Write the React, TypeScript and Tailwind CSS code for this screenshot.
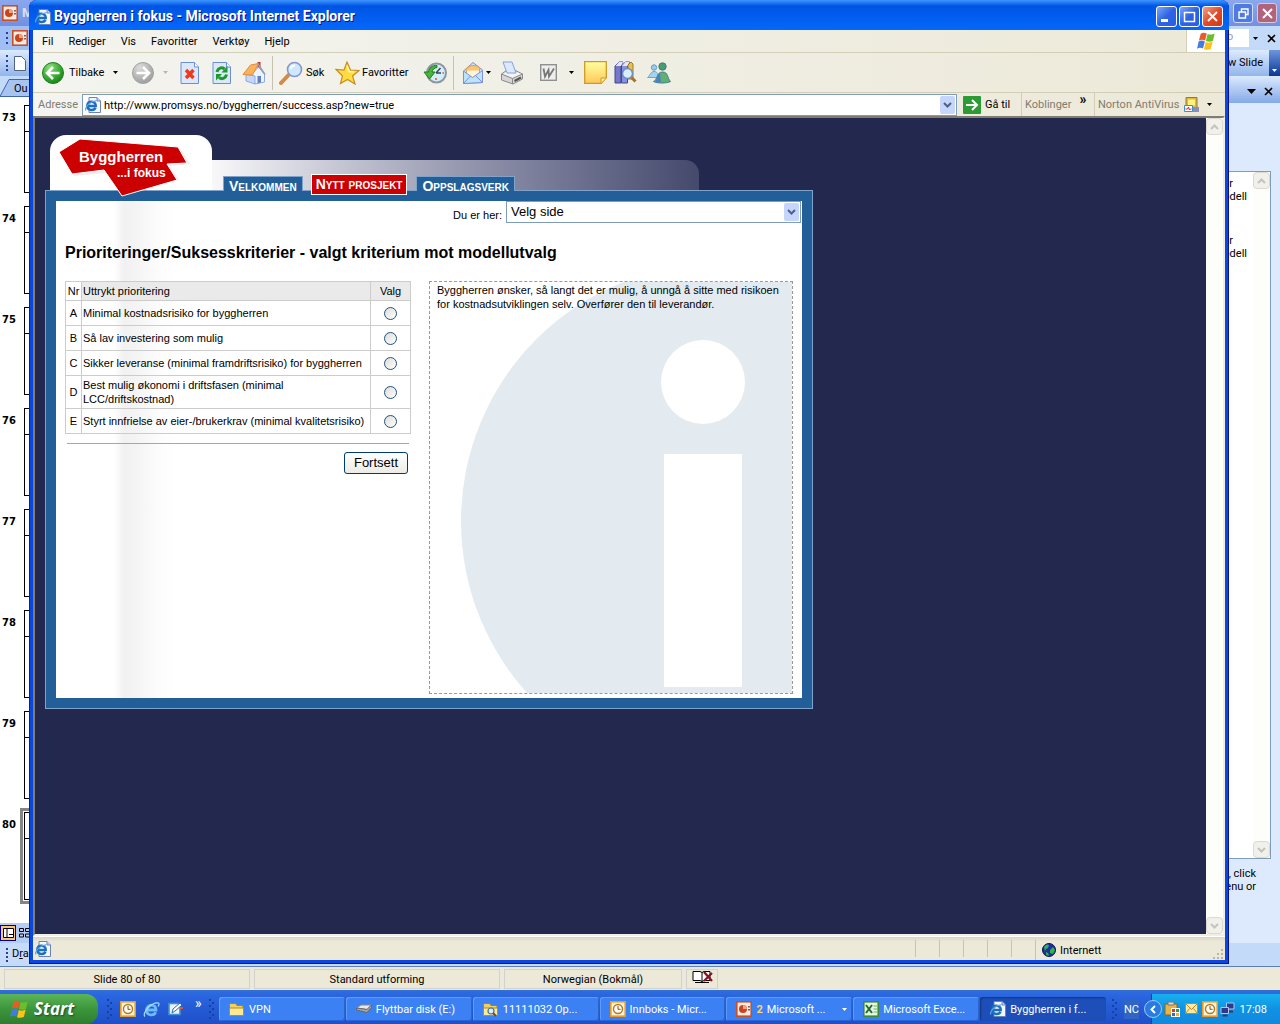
import type { ReactNode } from 'react';

const slides = [73, 74, 75, 76, 77, 78, 79, 80];

const priorities = [
  { nr: 'A', text: 'Minimal kostnadsrisiko for byggherren' },
  { nr: 'B', text: 'Så lav investering som mulig' },
  { nr: 'C', text: 'Sikker leveranse (minimal framdriftsrisiko) for byggherren' },
  { nr: 'D', text: 'Best mulig økonomi i driftsfasen (minimal LCC/driftskostnad)' },
  { nr: 'E', text: 'Styrt innfrielse av eier-/brukerkrav (minimal kvalitetsrisiko)' },
];

/* ---------- icons ---------- */

function Caret({ color = '#000' }: { color?: string }) {
  return (
    <svg width="5" height="3" viewBox="0 0 5 3" className="shrink-0">
      <path d="M0 0h5L2.5 3z" fill={color} />
    </svg>
  );
}

function Chevron({ up = false, color = '#4d6185' }: { up?: boolean; color?: string }) {
  return (
    <svg width="9" height="6" viewBox="0 0 9 6" fill="none" stroke={color} strokeWidth="2">
      <path d={up ? 'M1 5l3.5-3.5L8 5' : 'M1 1l3.5 3.5L8 1'} />
    </svg>
  );
}

function IePageIcon() {
  return (
    <svg width="16" height="16" viewBox="0 0 16 16" className="shrink-0">
      <path d="M4 .5h8l3.5 3.5v11.5H4z" fill="#f4f7ff" stroke="#6b82b8" />
      <path d="M12 .5V4h3.5" fill="#c7d5f3" stroke="#6b82b8" />
      <path d="M2.500 9h8.300c.2-5.500-8.200-6-8.600 0 .2 5 7 5 8.300 1.800" fill="none" stroke="#1c6fc0" strokeWidth="2.400" />
      <path d="M1 13.500C-1 10.500 6 3.500 11.500 4" fill="none" stroke="#5aa9e6" strokeWidth="1.200" />
    </svg>
  );
}

function IeIcon() {
  return (
    <svg width="17" height="17" viewBox="0 0 17 17">
      <path d="M4 9h9c.2-6.500-9.300-6.500-9.500.3.2 5.900 7.700 5.700 9.200 2" fill="none" stroke="#6cbcf8" strokeWidth="2.800" />
      <path d="M2 15.500C-1.500 12.500 8 1 15.500 2c1 .8.300 2.400-.5 3.500" fill="none" stroke="#a9dcff" strokeWidth="1.200" />
    </svg>
  );
}

function WindowsFlag({ size = 20 }: { size?: number }) {
  return (
    <svg width={size} height={size} viewBox="0 0 20 20" className="shrink-0">
      <path d="M4.500 2.500c2-1.300 3.700-1 5.700-.2L8.700 9C6.500 8 4.800 8 2.800 9z" fill="#ee5a24" />
      <path d="M11 2.800c2 .8 4 .9 6.800-.5L16.200 9.200c-2.400 1.300-4.500 1.200-6.700.3z" fill="#6cbf2c" />
      <path d="M2.500 10c2-1.200 3.900-1 5.900-.1l-1.700 6.800c-2-1-3.800-.9-5.700.2z" fill="#3f7de0" />
      <path d="M9.300 10.500c2 .9 4.200.9 6.600-.4l-1.700 6.800c-2.200 1.400-4.400 1.300-6.600.4z" fill="#fbc21a" />
    </svg>
  );
}

function RoundArrow({ back = false }: { back?: boolean }) {
  return (
    <svg width="24" height="24" viewBox="0 0 24 24">
      <defs>
        <radialGradient id={back ? 'goBack' : 'goFwd'} cx=".35" cy=".25" r=".85">
          <stop offset="0" stopColor={back ? '#8be07c' : '#dcdcdc'} />
          <stop offset=".6" stopColor={back ? '#35a82f' : '#b3b3b3'} />
          <stop offset="1" stopColor={back ? '#157a15' : '#999'} />
        </radialGradient>
      </defs>
      <circle cx="12" cy="12" r="10.500" fill={`url(#${back ? 'goBack' : 'goFwd'})`} stroke={back ? '#1c7f1c' : '#a2a2a2'} />
      <path
        d={back ? 'M12 6l-6 6 6 6M6.500 12H18.500' : 'M12 6l6 6-6 6M17.500 12H5.500'}
        fill="none"
        stroke="#fff"
        strokeWidth="2.600"
      />
    </svg>
  );
}

function PageFrame({ children }: { children: ReactNode }) {
  return (
    <svg width="20" height="24" viewBox="0 0 20 24">
      <path d="M1 1.500h13.500L18.500 6v16.500H1z" fill="#dbe7fb" stroke="#6c8fd0" />
      <path d="M14.500 1.500V6h4" fill="#fff" stroke="#6c8fd0" />
      {children}
    </svg>
  );
}

function StopIcon() {
  return (
    <PageFrame>
      <path d="M6 9l7.500 8M13.500 9L6 17" stroke="#f0391a" strokeWidth="3.400" />
    </PageFrame>
  );
}

function RefreshIcon() {
  return (
    <PageFrame>
      <path d="M5 11c1-4.500 5-5 7.500-3" fill="none" stroke="#1e9a2c" strokeWidth="3" />
      <path d="M9.500 11.500h6V5z" fill="#1e9a2c" />
      <path d="M14.500 13.500c-1 4.500-5 5-7.500 3" fill="none" stroke="#1e9a2c" strokeWidth="3" />
      <path d="M10 13H4v6.500z" fill="#1e9a2c" />
    </PageFrame>
  );
}

function HomeIcon() {
  return (
    <svg width="24" height="24" viewBox="0 0 24 24">
      <path d="M15.500 1h3v7h-3z" fill="#c0392b" />
      <path d="M10 13l6.500-7 6 7.500V21L13 23z" fill="#eef4ff" stroke="#8ea9dc" />
      <path d="M4 13.500V20l9 3v-8z" fill="#c5d6f6" stroke="#8ea9dc" />
      <path d="M1 13.500L8.500 4l8-1.500L10.500 14z" fill="#fbb05a" stroke="#e2903a" />
      <path d="M16 3l7 10.500" stroke="#9a9bb4" strokeWidth="1.500" />
      <path d="M15.500 15h3.500v6.500l-3.500.7z" fill="#5d80c6" />
    </svg>
  );
}

function SearchIcon() {
  return (
    <svg width="24" height="24" viewBox="0 0 24 24">
      <path d="M2 22l8-8.500" stroke="#d38a45" strokeWidth="4" strokeLinecap="round" />
      <circle cx="15.500" cy="8.500" r="7" fill="#cfe8ff" stroke="#8398d2" strokeWidth="1.600" />
      <path d="M11.500 8c.5-2.500 2.500-3.500 4.500-3.500" fill="none" stroke="#fff" strokeWidth="2" />
    </svg>
  );
}

function StarIcon() {
  return (
    <svg width="25" height="24" viewBox="0 0 25 24">
      <path
        d="M12 1l3.500 8 8.500.5-6.500 5.500 2.500 8-7.500-4.500L5.500 22.500l2-7.500L1 8.500l8 .5z"
        fill="#ffdc40"
        stroke="#c98d1d"
        strokeWidth="1.200"
      />
      <path d="M12 4.500l2 6 5 .5" fill="none" stroke="#fff6b8" strokeWidth="1.500" />
    </svg>
  );
}

function HistoryIcon() {
  return (
    <svg width="25" height="24" viewBox="0 0 25 24">
      <circle cx="13.500" cy="12" r="9.500" fill="#d5ecfb" stroke="#8c979f" strokeWidth="2" />
      <path d="M13 12l4.500-5M13 12h5" stroke="#33475b" strokeWidth="1.500" />
      <path d="M13 17v2M19.500 12h1.500" stroke="#e0562a" strokeWidth="1.500" />
      <path d="M14 4.500C9 4 6 7 5.500 11H1l5.500 7 5.500-7H9c.5-2.500 2-4 5-4.500z" fill="#46b53a" stroke="#1f7d1d" />
    </svg>
  );
}

function MailIcon() {
  return (
    <svg width="22" height="24" viewBox="0 0 22 24">
      <path d="M1.500 10L11 1.500 20.500 9v12.500l-19 1z" fill="#cfe0fb" stroke="#7d92d2" />
      <path d="M4 8.500C7 3.500 14 3.500 18 7l-1 5-6 3-6-2.500z" fill="#f9c675" stroke="#e09a44" />
      <path d="M5 9.500h12v4l-6 2.500-6-2z" fill="#fff3dc" />
      <path d="M1.500 10l9 6.500 10-7v12l-19 1z" fill="#b9e4fb" stroke="#7d92d2" />
      <path d="M1.500 22.500l7-7.500M20.500 21.500l-7-7" stroke="#7d92d2" />
    </svg>
  );
}

function PrinterIcon() {
  return (
    <svg width="24" height="24" viewBox="0 0 24 24">
      <path d="M1.500 13l5-3.500h9l7 3.500v5l-9.500 5-11.500-4z" fill="#d6d6d6" stroke="#8a8a8a" />
      <path d="M2.500 13l4.500-2.500h8.500l6 2.500-9 4z" fill="#f4f4f4" />
      <path d="M3 1h9l4 11H7z" fill="#dbe9ff" stroke="#88a0d6" />
      <path d="M1.500 13l11 4.500 10-4.500M12.500 17.500V23" fill="none" stroke="#8a8a8a" />
      <path d="M14.500 20l6.500-3.500" stroke="#555" strokeWidth="2" />
    </svg>
  );
}

function WordIcon() {
  return (
    <svg width="17" height="17" viewBox="0 0 17 17">
      <rect x=".7" y=".7" width="15.600" height="15.600" fill="#eee" stroke="#909090" strokeWidth="1.400" />
      <path d="M3.500 4.500l1.500 8 3.500-6.500.5 6.500 5-8" fill="none" stroke="#777" strokeWidth="1.800" />
    </svg>
  );
}

function NoteIcon() {
  return (
    <svg width="23" height="23" viewBox="0 0 23 23">
      <defs>
        <linearGradient id="note" x2="0" y2="1">
          <stop offset="0" stopColor="#ffffa0" />
          <stop offset="1" stopColor="#ffc75a" />
        </linearGradient>
      </defs>
      <path d="M.7.7h21.600v16l-5 5.600H.7z" fill="url(#note)" stroke="#cf9a20" strokeWidth="1.300" />
      <path d="M17 22v-5h5" fill="#fff0a0" stroke="#cf9a20" />
    </svg>
  );
}

function ResearchIcon() {
  return (
    <svg width="23" height="23" viewBox="0 0 23 23">
      <path d="M1 5l4-4h4L7 5v17H1z" fill="#7378c9" stroke="#41468f" />
      <path d="M1.500 5H7l2-4H5z" fill="#e4e6fb" />
      <path d="M7.500 5l4-4h4l-2 4v17h-6z" fill="#8d91db" stroke="#41468f" />
      <path d="M8 5h5.500l2-4h-4z" fill="#e4e6fb" />
      <path d="M14 4l3-3 2 2v15h-5z" fill="#e9bf52" stroke="#a57a1d" />
      <circle cx="13.500" cy="12.500" r="5" fill="#d7efff" stroke="#6a8fc4" strokeWidth="1.500" />
      <path d="M17.500 16.500l4 4" stroke="#a5742b" strokeWidth="3" />
    </svg>
  );
}

function MessengerIcon() {
  return (
    <svg width="24" height="22" viewBox="0 0 24 22">
      <circle cx="7" cy="5.500" r="2.700" fill="#9ccbe8" stroke="#6a9cc0" />
      <path d="M.5 15.500C3 14 3.500 9.500 7 9.500s4 3 5 6z" fill="#a6d3ee" stroke="#6fa5c8" />
      <circle cx="15.500" cy="4.500" r="3.700" fill="#4a9a77" stroke="#3c7f78" />
      <path d="M6.500 19.500c4-1.500 3-9.500 9-9.500s4.500 6 8 9.500c-4 2-13 2-17 0z" fill="#62b070" stroke="#3f7f98" />
      <path d="M13 10.500c-3 1.500-2 6-5 9l6 1z" fill="#4d80c2" />
    </svg>
  );
}

function OutlookIcon() {
  return (
    <svg width="16" height="16" viewBox="0 0 16 16" className="shrink-0">
      <rect x=".8" y=".8" width="14.400" height="14.400" fill="#fff3d6" stroke="#e79a2b" strokeWidth="1.600" />
      <circle cx="8" cy="8" r="4.500" fill="#fffdf4" stroke="#b07a24" strokeWidth="1.400" />
      <path d="M8 5v3.300h2.500" fill="none" stroke="#7a5314" />
    </svg>
  );
}

function PowerPointIcon() {
  return (
    <svg width="16" height="16" viewBox="0 0 16 16" className="shrink-0">
      <rect x=".8" y=".8" width="14.400" height="14.400" fill="#fde9e0" stroke="#c5502a" strokeWidth="1.600" />
      <circle cx="7" cy="8" r="4" fill="#c8461f" />
      <path d="M7 8V4a4 4 0 014 4z" fill="#f3a27f" />
      <path d="M13 5v1.500M13 8v1.500" stroke="#333" strokeWidth="1.400" />
    </svg>
  );
}

function FolderIcon({ search = false }: { search?: boolean }) {
  return (
    <svg width="16" height="15" viewBox="0 0 16 15" className="shrink-0">
      <path d="M.5 13.500V2.500l1-1h5l1.500 2h6v10z" fill="#f3cf5c" stroke="#a9801e" />
      <path d="M.5 13.500V6h14v7.500z" fill="#ffe991" stroke="#b48c25" />
      {search && <circle cx="8" cy="9" r="3" fill="#d6eeff" stroke="#3f6ea5" strokeWidth="1.200" />}
      {search && <path d="M10 11l3 3" stroke="#7a4d1b" strokeWidth="2" />}
    </svg>
  );
}

function DriveIcon() {
  return (
    <svg width="16" height="12" viewBox="0 0 16 12" className="shrink-0">
      <path d="M.5 5L5 2h10.500L11 6.500z" fill="#e8e8e8" stroke="#888" />
      <path d="M.5 5v2L11 9.500l4.500-5V2L11 6.500z" fill="#a9a9a9" stroke="#666" />
    </svg>
  );
}

function ExcelIcon() {
  return (
    <svg width="16" height="16" viewBox="0 0 16 16" className="shrink-0">
      <rect x=".8" y=".8" width="14.400" height="14.400" fill="#e9f5e5" stroke="#3b8a38" strokeWidth="1.600" />
      <path d="M3 4l6 8M9 4l-6 8" stroke="#1f6d2a" strokeWidth="2" />
      <path d="M10.500 5H14M10.500 8H14M10.500 11H14" stroke="#6fae6a" />
    </svg>
  );
}

function GlobeIcon() {
  return (
    <svg width="14" height="14" viewBox="0 0 14 14">
      <circle cx="7" cy="7" r="6.500" fill="#1b2fae" stroke="#0b1450" />
      <path d="M2 4c2-3 4-3 5-2l-1 3-2 1-1 2zM8 7l3-3 2 3-2 4-3-1zM4 9l2 1 1 3-3-1z" fill="#34b53a" />
    </svg>
  );
}

/* ---------- small parts ---------- */

function CaptionButton({ kind }: { kind: 'min' | 'max' | 'close' }) {
  const close = kind === 'close';
  return (
    <button
      aria-label={kind}
      className={`flex size-[21px] items-center justify-center rounded-[3px] border border-white ${
        close
          ? 'bg-linear-to-br from-[#f0a088] via-[#e0492a] to-[#d03a17]'
          : 'bg-linear-to-br from-[#7ea6f5] via-[#2f62e4] to-[#2a5ee0]'
      }`}
    >
      <svg width="13" height="13" viewBox="0 0 13 13" fill="none" stroke="#fff">
        {kind === 'min' && <path d="M1 10.500h7" strokeWidth="3" />}
        {kind === 'max' && <path d="M1 2.500h11M1.500 2v9.500h10V2" strokeWidth="1.500" />}
        {close && <path d="M2 2l9 9M11 2l-9 9" strokeWidth="2" />}
      </svg>
    </button>
  );
}

function ScrollBar() {
  const cap = 'flex size-[17px] items-center justify-center rounded-sm border border-[#dcdacf] bg-[#f1f0ea]';
  return (
    <div className="flex w-[17px] shrink-0 flex-col justify-between bg-[#fdfdf9]">
      <button aria-label="up" className={cap}>
        <Chevron up color="#c5c4bc" />
      </button>
      <button aria-label="down" className={cap}>
        <Chevron color="#c5c4bc" />
      </button>
    </div>
  );
}

function Grip({ color }: { color: string }) {
  return (
    <svg width="6" height="20" viewBox="0 0 6 20" fill={color} className="shrink-0">
      <path d="M0 0h2v2H0zM0 6h2v2H0zM0 12h2v2H0zM0 18h2v2H0zM3 3h2v2H3zM3 9h2v2H3zM3 15h2v2H3z" />
    </svg>
  );
}

function ToolButton({ className, label, children }: { className: string; label: string; children: ReactNode }) {
  return (
    <button aria-label={label} className={`flex h-full shrink-0 items-center ${className}`}>
      {children}
    </button>
  );
}

/* ---------- PowerPoint, behind the browser ---------- */

function PowerPointWindow() {
  return (
    <div className="flex min-h-0 flex-1 flex-col bg-[#c3daf9]">
      <div className="flex h-[26px] shrink-0 items-center justify-between bg-linear-to-b from-[#8ba8ee] to-[#7290df] pr-[3px] pl-[2px]">
        <div className="flex items-center gap-1 text-[13px] font-bold text-[#d5e0fa]">
          <PowerPointIcon />M
        </div>
        <div className="flex gap-1">
          <button aria-label="restore" className="flex size-[20px] items-center justify-center rounded-[3px] border border-[#d0dcf8] bg-[#4f7ae0]">
            <svg width="11" height="11" viewBox="0 0 11 11" fill="none" stroke="#fff" strokeWidth="1.400">
              <path d="M3.500 3.500v-2.500h6.500v5.500H7.500M1 4h6.500v6H1z" />
            </svg>
          </button>
          <button aria-label="close program" className="flex size-[20px] items-center justify-center rounded-[3px] border border-[#d8c8dc] bg-[#b0637b]">
            <svg width="11" height="11" viewBox="0 0 11 11" stroke="#fff" strokeWidth="2">
              <path d="M1 1l9 9M10 1l-9 9" />
            </svg>
          </button>
        </div>
      </div>
      <div className="flex h-6 shrink-0 items-center justify-between bg-linear-to-r from-[#9ebef5] to-[#c4daf9] pr-1 pl-[6px]">
        <div className="flex items-center gap-1">
          <svg width="2" height="12" fill="#27418c">
            <path d="M0 0h2v2H0zM0 5h2v2H0zM0 10h2v2H0z" />
          </svg>
          <PowerPointIcon />
        </div>
        <div className="flex items-center gap-[6px]">
          <div className="flex h-[18px] w-[34px] bg-white text-[11px] text-gray-400">
            <span className="flex-1">o</span>
            <span className="flex w-3 items-center justify-center bg-[#c3daf9]">
              <Caret />
            </span>
          </div>
          <svg width="9" height="9" viewBox="0 0 9 9" stroke="#000" strokeWidth="1.600">
            <path d="M1 1l7 7M8 1L1 8" />
          </svg>
        </div>
      </div>
      <div className="flex h-[26px] shrink-0 items-center justify-between bg-linear-to-b from-[#dceafd] to-[#93b5ec] pl-[6px]">
        <div className="flex items-center gap-[6px]">
          <svg width="2" height="16" fill="#27418c">
            <path d="M0 0h2v2H0zM0 5h2v2H0zM0 10h2v2H0zM0 14h2v2H0z" />
          </svg>
          <svg width="12" height="15" viewBox="0 0 12 15">
            <path d="M.5.500h7l4 4v10H.5z" fill="#fff" stroke="#51637f" />
          </svg>
        </div>
        <div className="flex h-full items-center gap-[6px] text-[11px]">
          w Slide
          <span className="flex h-full w-[11px] items-end justify-center bg-linear-to-b from-[#6d95de] to-[#0c3794] pb-1">
            <Caret color="#fff" />
          </span>
        </div>
      </div>
      <div className="flex min-h-0 flex-1 justify-between">
        <div className="flex w-10 flex-col">
          <div className="flex h-[21px] shrink-0 items-center bg-[#c3daf9]">
            <svg width="14" height="21" viewBox="0 0 14 21" className="shrink-0">
              <path d="M14 3.500H9L0 20.500h14" fill="#a7c3f0" stroke="#3f66b5" />
            </svg>
            <span className="mt-[3px] h-[18px] flex-1 border-y border-[#3f66b5] bg-[#a7c3f0] pt-px text-[11px] leading-[15px]">Ou</span>
          </div>
          <ol className="flex min-h-0 flex-1 flex-col gap-[13px] overflow-hidden bg-white pt-2">
            {slides.map((n) => (
              <li key={n} className="flex h-[88px] shrink-0 gap-2 pl-[2px] font-['DejaVu_Sans',sans-serif] text-[10px] font-bold">
                <span className="w-[14px] pt-[5px]">{n}</span>
                <span className={`w-6 border border-black bg-white ${n === 80 ? 'outline-3 outline-offset-1 outline-[#858585]' : ''}`}>
                  <span className="block h-[26px] border-b border-black" />
                </span>
              </li>
            ))}
          </ol>
          <div className="flex h-5 shrink-0 items-center gap-[3px] bg-[#b4cdf5]">
            <span className="flex size-4 items-center justify-center border border-[#000080] bg-[#fdc578]">
              <svg width="11" height="10" viewBox="0 0 11 10" fill="#fff" stroke="#000">
                <path d="M.5.500h10v9H.5zM4 .5v9M6 6.500h4" />
              </svg>
            </span>
            <svg width="11" height="10" viewBox="0 0 11 10" fill="none" stroke="#000">
              <path d="M.5.500h4v3h-4zM6.500.500h4v3h-4zM.5 6h4v3h-4zM6.500 6h4v3h-4z" />
            </svg>
          </div>
        </div>
        <div className="flex w-20 flex-col bg-[#ddeafd] text-[11px]">
          <div className="flex h-[27px] shrink-0 items-center justify-end gap-2 bg-linear-to-b from-[#dceafd] to-[#84a9e8] pt-1 pr-[7px]">
            <svg width="9" height="5">
              <path d="M0 0h9L4.500 5z" />
            </svg>
            <svg width="9" height="9" viewBox="0 0 9 9" stroke="#000" strokeWidth="1.600">
              <path d="M1 1l7 7M8 1L1 8" />
            </svg>
          </div>
          <div className="mt-[68px] mr-[9px] flex min-h-0 flex-1 border border-[#7f9db9] bg-white">
            <div className="flex-1 pt-[5px] pr-[6px] text-right leading-[13px]">
              <p className="pr-[14px]">r</p>
              <p>odell</p>
              <p className="mt-[31px] pr-[14px]">r</p>
              <p>odell</p>
            </div>
            <ScrollBar />
          </div>
          <p className="h-[84px] shrink-0 pt-2 pr-6 text-right leading-[13px]">
            , click
            <br />
            enu or
          </p>
        </div>
      </div>
      <div className="flex h-6 shrink-0 items-center gap-1 border-b border-[#5d7fb8] bg-linear-to-r from-[#c6dafa] to-[#c3daf9] pl-[6px] text-[11px]">
        <svg width="2" height="14" fill="#27418c">
          <path d="M0 0h2v2H0zM0 4h2v2H0zM0 8h2v2H0zM0 12h2v2H0z" />
        </svg>
        <span>
          D<u>r</u>a
        </span>
      </div>
      <div className="flex h-[23px] shrink-0 items-center gap-1 bg-[#ece9d8] px-1 text-center text-[11px]">
        <span className="w-[246px] border border-[#d3d1cc] pt-px leading-[17px]">Slide 80 of 80</span>
        <span className="w-[246px] border border-[#d3d1cc] pt-px leading-[17px]">Standard utforming</span>
        <span className="w-[178px] border border-[#d3d1cc] pt-px leading-[17px]">Norwegian (Bokmål)</span>
        <span className="flex h-5 w-8 justify-center border border-[#d3d1cc]">
          <svg width="21" height="14" viewBox="0 0 21 14">
            <path d="M1 1.500h7l2 1 2-1h6v9h-6l-2 1-2-1H1zM10 2.500v9M3 12.500h14" fill="#fff" stroke="#000" />
            <path d="M12 2l8 9M20 3l-8 8" stroke="#8a1020" strokeWidth="2.200" />
          </svg>
        </span>
      </div>
    </div>
  );
}

/* ---------- browser chrome ---------- */

function TitleBar() {
  return (
    <div className="flex h-[30px] shrink-0 items-center justify-between rounded-t-lg bg-linear-to-b from-[#3d95ff] via-[#0054e3] via-20% to-[#0468fb] pt-[3px] pr-[6px] pl-[6px]">
      <h1 className="flex items-center gap-[3px] text-[14px] font-bold text-white [text-shadow:1px_1px_#0f1089]">
        <IePageIcon />
        Byggherren i fokus - Microsoft Internet Explorer
      </h1>
      <div className="flex gap-[2px]">
        <CaptionButton kind="min" />
        <CaptionButton kind="max" />
        <CaptionButton kind="close" />
      </div>
    </div>
  );
}

function MenuBar() {
  return (
    <nav className="flex h-[23px] shrink-0 items-stretch justify-between border-b border-[#d3ceb8]">
      <div className="flex items-center gap-[15px] pt-[2px] pl-[9px] text-[11px]">
        <button>Fil</button>
        <button>Rediger</button>
        <button>Vis</button>
        <button>Favoritter</button>
        <button>Verktøy</button>
        <button>Hjelp</button>
      </div>
      <div className="flex w-[39px] items-center justify-center border-l border-[#d3ceb8] bg-white">
        <WindowsFlag size={21} />
      </div>
    </nav>
  );
}

function ToolBar() {
  return (
    <div className="flex h-10 shrink-0 items-center border-b border-[#d3ceb8] pl-2 text-[11px]">
      <ToolButton label="Tilbake" className="w-[90px] gap-1">
        <RoundArrow back />
        <span className="w-[38px] pt-[2px] text-left">Tilbake</span>
        <span className="pl-[2px]">
          <Caret />
        </span>
      </ToolButton>
      <ToolButton label="Frem" className="w-[49px] gap-2">
        <RoundArrow />
        <Caret color="#b9b7a9" />
      </ToolButton>
      <ToolButton label="Stopp" className="w-8">
        <StopIcon />
      </ToolButton>
      <ToolButton label="Oppdater" className="w-[30px]">
        <RefreshIcon />
      </ToolButton>
      <ToolButton label="Hjem" className="w-[30px]">
        <HomeIcon />
      </ToolButton>
      <span className="h-[34px] w-[7px] border-l border-[#c5c2b0]" />
      <ToolButton label="Søk" className="w-[56px] gap-[3px]">
        <SearchIcon />
        <span className="pt-[2px]">Søk</span>
      </ToolButton>
      <ToolButton label="Favoritter" className="w-[88px] gap-[2px]">
        <StarIcon />
        <span className="pt-[2px]">Favoritter</span>
      </ToolButton>
      <ToolButton label="Logg" className="w-[30px]">
        <HistoryIcon />
      </ToolButton>
      <span className="h-[34px] w-[9px] border-l border-[#c5c2b0]" />
      <ToolButton label="E-post" className="w-[38px] gap-[2px]">
        <MailIcon />
        <Caret />
      </ToolButton>
      <ToolButton label="Skriv ut" className="w-10">
        <PrinterIcon />
      </ToolButton>
      <ToolButton label="Rediger med Word" className="w-11 gap-3">
        <WordIcon />
        <Caret />
      </ToolButton>
      <ToolButton label="Notat" className="w-[30px]">
        <NoteIcon />
      </ToolButton>
      <ToolButton label="Oppslag" className="w-[33px]">
        <ResearchIcon />
      </ToolButton>
      <ToolButton label="Messenger" className="w-[30px]">
        <MessengerIcon />
      </ToolButton>
    </div>
  );
}

function AddressBar() {
  return (
    <div className="flex h-[23px] shrink-0 items-center pl-[5px] text-[11px] text-[#7f7c70]">
      <label htmlFor="address" className="w-11 pt-[2px]">
        Adresse
      </label>
      <div className="flex h-[22px] flex-1 items-center gap-[3px] border border-[#7f9db9] bg-white pl-[2px]">
        <IePageIcon />
        <input
          id="address"
          className="min-w-0 flex-1 pt-[3px] text-[11px] text-black outline-none"
          defaultValue="http://www.promsys.no/byggherren/success.asp?new=true"
        />
        <button aria-label="address list" className="mr-px flex h-[18px] w-[15px] items-center justify-center rounded-xs bg-[#c6d5fb]">
          <Chevron />
        </button>
      </div>
      <button className="flex w-[64px] items-center gap-1 pl-[6px] text-black">
        <svg width="18" height="18" viewBox="0 0 18 18">
          <rect width="18" height="18" rx="1" fill="#2c9a35" />
          <path d="M3 9h11M9 4l5 5-5 5" fill="none" stroke="#fff" strokeWidth="2" />
        </svg>
        <span className="pt-[2px]">Gå til</span>
      </button>
      <div className="flex h-full w-[73px] items-center gap-2 border-l border-[#d3ceb8] pt-[2px] pl-[3px]">
        Koblinger
        <span className="-mt-3 text-[14px] font-bold text-black">»</span>
      </div>
      <div className="flex h-full w-[131px] items-center border-l border-[#d3ceb8] pl-[3px]">
        <span className="w-[86px] pt-[2px]">Norton AntiVirus</span>
        <svg width="15" height="16" viewBox="0 0 15 16">
          <path d="M2 .5h11v10H2z" fill="#e3b53a" stroke="#8b7a4a" />
          <path d="M4 2.500h7v6H4z" fill="#fff27a" />
          <path d="M8 10h7v5H8z" fill="#8c8fb5" />
          <path d="M.5 8.500h8v6h-8z" fill="#fff" stroke="#3a8fd0" />
          <path d="M1.500 12h2l1-2 1 3 1-1h1" fill="none" stroke="#e02020" />
        </svg>
        <span className="pl-2">
          <Caret />
        </span>
      </div>
    </div>
  );
}

function StatusBar() {
  return (
    <div className="flex h-6 shrink-0 items-stretch border-t border-white bg-linear-to-b from-[#d8d5c4] via-[#ece9d8] via-20% to-[#ece9d8] pl-[2px] text-[11px]">
      <div className="flex flex-1 items-center">
        <IePageIcon />
      </div>
      {[0, 1, 2, 3, 4].map((i) => (
        <span key={i} className="my-[3px] w-6 border-l border-[#c8c5b2]" />
      ))}
      <div className="mt-[3px] flex w-[190px] items-center gap-1 border-l border-[#c8c5b2] pl-[6px]">
        <GlobeIcon />
        <span className="pt-[2px]">Internett</span>
        <svg width="11" height="11" viewBox="0 0 11 11" fill="#b8b5a2" className="mr-px ml-auto self-end">
          <path d="M8 0h2v2H8zM8 4h2v2H8zM4 4h2v2H4zM8 8h2v2H8zM4 8h2v2H4zM0 8h2v2H0z" />
        </svg>
      </div>
    </div>
  );
}

/* ---------- the web page ---------- */

function SiteHeader() {
  const tab = 'relative border border-b-0 border-[#7fa3cb] bg-[#225f98] px-[5px] pt-1 leading-[10px]';
  return (
    <header className="flex h-[55px] items-end pl-[5px]">
      <div className="relative z-10 h-full w-[162px] rounded-t-[16px] bg-white">
        <svg width="162" height="66" viewBox="0 0 162 66" fontFamily="Liberation Sans, Arial, sans-serif" fontWeight="bold" fill="#fff">
          <path d="M11 21l20-15 99 7 10 16-21 2 10 14-30 8H75L57 38l-33 3z" fill="#ededed" />
          <path d="M9 17L30 4l98 8 9 16-20 1 10 16-55 16-18-26-32 4z" fill="#c00" stroke="#fff" />
          <text x="29" y="27" fontSize="15">
            Byggherren
          </text>
          <text x="67" y="42" fontSize="12">
            ...i fokus
          </text>
        </svg>
      </div>
      <nav className="flex h-[30px] w-[487px] items-end rounded-tr-[14px] bg-linear-to-r from-[#f8f8f9] via-[#8f91aa] via-55% to-[#454a6d] pl-[11px] text-[14px] font-bold text-white [font-variant:small-caps]">
        <a href="#velkommen" className={`${tab} -mb-px`}>
          Velkommen
        </a>
        <a href="#prosjekt" className="relative mr-[9px] ml-2 -mb-[5px] border border-white bg-[#c00] px-1 py-[2px] leading-[15px]">
          Nytt prosjekt
        </a>
        <a href="#oppslag" className={`${tab} -mb-px`}>
          Oppslagsverk
        </a>
      </nav>
    </header>
  );
}

function PriorityTable() {
  return (
    <form>
      <table className="w-full border-collapse text-[11px] leading-[14px] [&_td]:border [&_td]:border-[#ccc] [&_th]:border [&_th]:border-[#ccc] [&_th]:font-normal">
        <thead>
          <tr className="h-[19px]">
            <th className="w-4">Nr</th>
            <th className="bg-[#eaeaea] px-px text-left">Uttrykt prioritering</th>
            <th className="w-10 bg-[#eaeaea]">Valg</th>
          </tr>
        </thead>
        <tbody>
          {priorities.map((p) => (
            <tr key={p.nr} className="h-[25px]">
              <td className="text-center">{p.nr}</td>
              <td className="px-px py-[2px]">
                <label htmlFor={`valg-${p.nr}`} className="block">
                  {p.text}
                </label>
              </td>
              <td className="text-center">
                <input
                  type="radio"
                  name="valg"
                  id={`valg-${p.nr}`}
                  className="mx-auto block size-[13px] appearance-none rounded-full border border-[#21517f] bg-linear-to-br from-[#dcdcd7] to-white checked:bg-[#21a121]"
                />
              </td>
            </tr>
          ))}
        </tbody>
      </table>
      <hr className="mx-[2px] mt-[9px] border-[#aca899]" />
      <div className="mt-2 flex justify-end pr-[3px]">
        <button
          type="button"
          className="h-[22px] w-16 rounded-[3px] border border-[#003c74] bg-linear-to-b from-white to-[#ecebe5] text-[13px] leading-[18px]"
        >
          Fortsett
        </button>
      </div>
    </form>
  );
}

function WebPage() {
  return (
    <div className="min-w-0 flex-1 overflow-hidden bg-[#23284f] pt-[17px] pl-[10px] font-['Liberation_Sans',Arial,sans-serif] text-black">
      <SiteHeader />
      <main className="max-w-[768px] border border-[#7fa3cb] bg-[#225f98] p-[10px]">
        <div className="bg-white bg-[linear-gradient(to_right,#fff_58px,#f1f1f1_68px,#f4f4f4_80px,#fdfdfd_105px,#fff_125px)] pb-1">
          <div className="flex h-[22px] items-center justify-end gap-1 pr-px text-[11px]">
            <label htmlFor="side" className="pt-[6px]">
              Du er her:
            </label>
            <div className="relative w-[295px]">
              <select id="side" className="block h-[22px] w-full appearance-none border border-[#7f9db9] bg-white pl-1 text-[13px] outline-none">
                <option>Velg side</option>
              </select>
              <span className="pointer-events-none absolute top-[2px] right-[2px] flex h-[18px] w-[15px] items-center justify-center rounded-xs bg-[#c6d5fb]">
                <Chevron />
              </span>
            </div>
          </div>
          <h2 className="mt-[18px] pl-[9px] text-[16px] leading-6 font-bold">
            Prioriteringer/Suksesskriterier - valgt kriterium mot modellutvalg
          </h2>
          <div className="mt-4 grid grid-cols-[346px_1fr] gap-[18px] px-[9px]">
            <PriorityTable />
            <aside className="relative min-h-[413px] border border-dashed border-[#999]">
              <svg viewBox="0 0 362 411" className="absolute inset-0 size-full">
                <circle cx="288" cy="239" r="257" fill="#e3ebf0" />
                <circle cx="273" cy="100" r="42" fill="#fff" />
                <path d="M234 172h78v233h-78z" fill="#fff" />
              </svg>
              <p className="relative px-[7px] pt-px text-[11px] leading-[14px]">
                Byggherren ønsker, så langt det er mulig, å unngå å sitte med risikoen for kostnadsutviklingen selv. Overfører den til leverandør.
              </p>
            </aside>
          </div>
        </div>
      </main>
    </div>
  );
}

function BrowserWindow() {
  return (
    <div className="absolute top-0 right-[51px] bottom-[60px] left-[29px] flex flex-col rounded-t-lg bg-[#0a46e0] shadow-[inset_-1px_-1px_#00138c,inset_1px_0_#0019cf]">
      <TitleBar />
      <div className="mx-1 mb-1 flex min-h-0 flex-1 flex-col bg-linear-to-r from-[#f4f4f0] to-[#ece9d8]">
        <MenuBar />
        <ToolBar />
        <AddressBar />
        <div className="flex min-h-0 flex-1 border-2 border-[#807d70] border-r-[#f1efe2] border-b-[#f1efe2]">
          <WebPage />
          <ScrollBar />
        </div>
        <StatusBar />
      </div>
    </div>
  );
}

/* ---------- taskbar ---------- */

const tasks = [
  { icon: <FolderIcon />, title: 'VPN' },
  { icon: <DriveIcon />, title: 'Flyttbar disk (E:)' },
  { icon: <FolderIcon search />, title: '11111032 Op...' },
  { icon: <OutlookIcon />, title: 'Innboks - Micr...' },
  { icon: <PowerPointIcon />, title: 'Microsoft ...', count: 2 },
  { icon: <ExcelIcon />, title: 'Microsoft Exce...' },
  { icon: <IePageIcon />, title: 'Byggherren i f...', active: true },
];

function Taskbar() {
  return (
    <footer className="flex h-[34px] shrink-0 items-stretch bg-linear-to-b from-[#2f6fd8] via-[#2a66e0] via-15% to-[#1f4fc8] pt-1 text-[11px] text-white">
      <button className="flex w-[98px] shrink-0 items-center gap-1 rounded-r-xl bg-linear-to-b from-[#5cb457] via-[#3c963c] to-[#2f7d2f] pl-[9px] font-['Open_Sans',sans-serif] text-[17px] font-bold italic [text-shadow:1px_1px_2px_#1b4a1b]">
        <WindowsFlag size={21} />
        Start
      </button>
      <div className="flex w-[121px] shrink-0 items-center gap-[7px] pl-[9px]">
        <Grip color="#1640a4" />
        <OutlookIcon />
        <IeIcon />
        <svg width="17" height="16" viewBox="0 0 17 16">
          <path d="M2 2.500h11v11H2z" fill="#e9f3ff" stroke="#3f8fd4" strokeWidth="1.600" />
          <path d="M5 12l1-4 7-6 2 2-7 6z" fill="#fff" stroke="#2c6bb0" />
          <path d="M13 6h3v2h-3z" fill="#e0562a" />
        </svg>
        <span className="-mt-3 pl-1 text-[14px]">»</span>
        <Grip color="#1640a4" />
      </div>
      <div className="flex min-w-0 flex-1 gap-px py-[3px] pr-[6px]">
        {tasks.map((t) => (
          <button
            key={t.title}
            className={`flex min-w-0 flex-1 items-center gap-1 rounded-[3px] pl-[10px] whitespace-nowrap ${
              t.active ? 'bg-[#1e4fb8] shadow-[inset_1px_1px_2px_#123580]' : 'bg-[#3c81f3] shadow-[inset_1px_1px_#5f9cf8,inset_-1px_-1px_#2a63d4]'
            }`}
          >
            {t.icon}
            {t.count && <span className="pt-[2px] font-bold text-[#ffd27a]">{t.count}</span>}
            <span className="pt-[2px]">{t.title}</span>
            {t.count && (
              <span className="mr-[5px] ml-auto">
                <Caret color="#fff" />
              </span>
            )}
          </button>
        ))}
      </div>
      <div className="flex w-[39px] shrink-0 items-center gap-[6px]">
        <Grip color="#1640a4" />
        <span className="bg-[#3165c4] leading-[19px]">NC</span>
      </div>
      <div className="flex w-[129px] shrink-0 items-center gap-[2px] border-l border-[#0c4aa8] bg-linear-to-b from-[#19b0f0] via-[#0f92e4] to-[#1288dc]">
        <button aria-label="show icons" className="-ml-2 flex size-[18px] shrink-0 items-center justify-center rounded-full border border-[#9cc8f8] bg-[#2a7be0]">
          <svg width="6" height="9" viewBox="0 0 6 9" fill="none" stroke="#fff" strokeWidth="2">
            <path d="M5 1L1.500 4.500 5 8" />
          </svg>
        </button>
        <svg width="17" height="17" viewBox="0 0 17 17" className="shrink-0">
          <path d="M1 3h12v11H1z" fill="#e6b54a" stroke="#8c6414" />
          <path d="M4 1h6v3H4z" fill="#d8d8d8" stroke="#777" />
          <path d="M7 7h9v9H7z" fill="#fff" />
          <path d="M8 8h3v3H8z" fill="#d83b2a" />
          <path d="M12 8h3v3h-3z" fill="#3a9a3a" />
          <path d="M8 12h3v3H8z" fill="#2f6ad8" />
          <path d="M12 12h3v3h-3z" fill="#efb320" />
        </svg>
        <svg width="17" height="14" viewBox="0 0 17 14" className="shrink-0">
          <path d="M2.500 1.500h12v10h-12z" fill="#ffe9a0" stroke="#b98b2a" />
          <path d="M2.500 1.500l6 6 6-6M2.500 11.500l4-5M14.500 11.500l-4-5" fill="none" stroke="#b98b2a" />
        </svg>
        <OutlookIcon />
        <svg width="15" height="15" viewBox="0 0 15 15" className="shrink-0">
          <path d="M6.500 1h7.500v6H6.500z" fill="#2c3a8c" stroke="#b8c4e8" />
          <path d="M1 5.500h7.500v6H1z" fill="#2c3a8c" stroke="#b8c4e8" />
          <path d="M2.500 13.500h5M9 9.500h4" stroke="#303a60" strokeWidth="2" />
        </svg>
        <time className="ml-auto pt-[2px] pr-[13px]">17:08</time>
      </div>
    </footer>
  );
}

export default function App() {
  return (
    <div className="relative flex h-screen flex-col overflow-hidden font-[Roboto,'Liberation_Sans',sans-serif] text-black">
      <PowerPointWindow />
      <Taskbar />
      <BrowserWindow />
    </div>
  );
}
